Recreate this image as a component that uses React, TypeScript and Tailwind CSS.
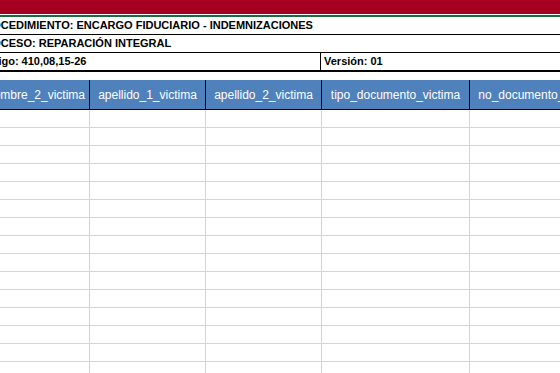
import React from 'react';

const columns = [
  { name: 'nombre_2_victima', w: 'w-[107px]' },
  { name: 'apellido_1_victima', w: 'w-[116px]' },
  { name: 'apellido_2_victima', w: 'w-[116px]' },
  { name: 'tipo_documento_victima', w: 'w-[148px]' },
  { name: 'no_documento_victima', w: 'w-[141px]' },
];

const rows = Array.from({ length: 15 }, (_, i) => i);

export default function App() {
  return (
    <div className="w-[560px] h-[373px] overflow-hidden bg-white font-['Liberation_Sans',Arial,sans-serif]">
      {/* franja institucional */}
      <div className="h-[14px] bg-[#a50021]" />
      <div className="h-px bg-white" />
      <div className="h-[2px] bg-[#1b6b40]" />

      {/* encabezado del formato */}
      <div className="ml-[-25px] w-[700px] text-[11px] font-bold text-black">
        <div className="h-[18px] border-b border-black flex items-center pl-[2px]">
          PROCEDIMIENTO: ENCARGO FIDUCIARIO - INDEMNIZACIONES
        </div>
        <div className="h-[18px] border-b border-black flex items-center pl-[2px]">
          PROCESO: REPARACIÓN INTEGRAL
        </div>
        <div className="h-[19px] border-b-2 border-black flex">
          <div className="w-[346px] border-r border-black flex items-center pl-[2px]">Código: 410,08,15-26</div>
          <div className="flex-1 flex items-center pl-[3px]">Versión: 01</div>
        </div>
      </div>

      <div className="h-[8px]" />

      {/* tabla */}
      <div className="ml-[-17px] w-[700px]">
        <div className="flex h-[30px] bg-[#4f81bd] border-b border-black text-white text-[12px]">
          {columns.map((c) => (
            <div key={c.name} className={`${c.w} shrink-0 border-r border-black flex items-center justify-center whitespace-nowrap`}>
              {c.name}
            </div>
          ))}
        </div>
        {rows.map((r) => (
          <div key={r} className="flex h-[18px] border-b border-[#d4d4d4]">
            {columns.map((c) => (
              <div key={c.name} className={`${c.w} shrink-0 border-r border-[#d4d4d4]`} />
            ))}
          </div>
        ))}
      </div>
    </div>
  );
}
